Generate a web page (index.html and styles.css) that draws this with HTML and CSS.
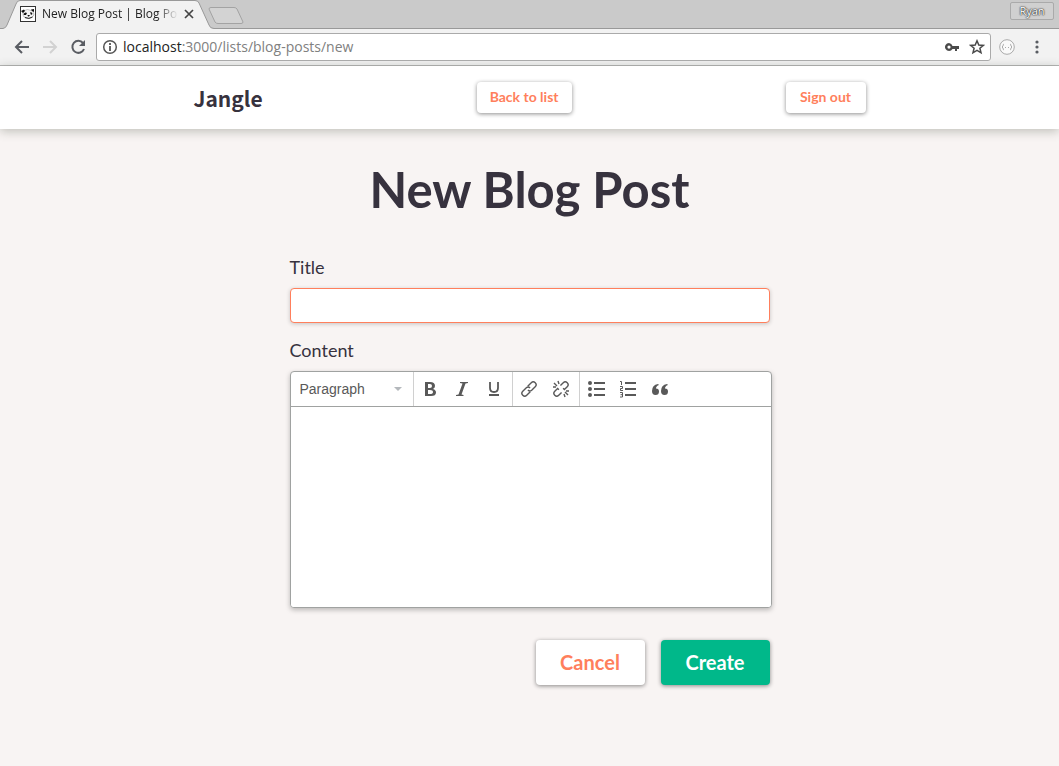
FILE: index.html
```html
<!DOCTYPE html>
<html lang="en">
<head>
<meta charset="utf-8">
<title>New Blog Post | Blog Posts</title>
<link rel="stylesheet" href="styles.css">
</head>
<body>
<div class="browser">
  <div class="tabstrip">
    <svg class="tab-shapes" width="260" height="29" viewBox="0 0 260 29" aria-hidden="true">
      <path d="M0 28.500H3Q6 28 7 25L16 4Q17 .5 20 .5H195Q198 .5 199 3L209 25Q210 28.500 214 28.500H260V29H0Z" fill="#f2f2f2"/>
      <path d="M0 28.500H3Q6 28 7 25L16 4Q17 .5 20 .5H195Q198 .5 199 3L209 25Q210 28.500 214 28.500H260" fill="none" stroke="#999"/>
      <path d="M211 7.500H234Q236 7.500 237 9L243 22Q243 23.500 241 23.500H218Q216 23.500 215 22L209 9Q209 7.500 211 7.500Z" fill="#d3d3d3" stroke="#a3a3a3"/>
    </svg>
    <div class="tab">
      <svg width="16" height="16" viewBox="0 0 16 16" aria-hidden="true">
        <rect x=".5" y=".5" width="15" height="15" fill="#fff" stroke="#333"/>
        <path d="M3 5Q7 2 13 5L14 9Q12 13 8 12.500Q3 12 3 8Z" fill="#f4f4f4" stroke="#999" stroke-width=".6"/>
        <path d="M1 5L4 3.500L5 5L3 7ZM11 3.500L14 3V6L12 5ZM3.500 8Q5 5.500 7 7L6 9H4ZM10 6.500Q12 5.500 12.500 8L11 9ZM7.500 9H10L9 10.500H8Z" fill="#111"/>
        <path d="M5 11.500Q9 13.500 12.500 11" fill="none" stroke="#222"/>
      </svg>
      <span class="tab-title">New Blog Post | Blog Posts</span>
      <button class="icon-button" aria-label="Close tab"><svg width="10" height="10" viewBox="0 0 10 10"><path d="M1 1L9 9M9 1L1 9" stroke="#444" stroke-width="1.700"/></svg></button>
    </div>
    <button class="profile">Ryan</button>
  </div>
  <div class="toolbar">
    <button class="icon-button" aria-label="Back"><svg width="16" height="16" viewBox="0 0 16 16"><path d="M15 8H2M8 2L2 8L8 14" fill="none" stroke="#5a5d63" stroke-width="2"/></svg></button>
    <button class="icon-button" aria-label="Forward"><svg width="16" height="16" viewBox="0 0 16 16"><path d="M1 8H14M8 2L14 8L8 14" fill="none" stroke="#d2d2d2" stroke-width="2"/></svg></button>
    <button class="icon-button" aria-label="Reload"><svg width="16" height="16" viewBox="0 0 16 16"><path d="M13 4A6 6 0 1 0 14 10" fill="none" stroke="#5a5d63" stroke-width="2"/><path d="M15 1V7H9Z" fill="#5a5d63"/></svg></button>
    <div class="address">
      <svg width="16" height="16" viewBox="0 0 16 16" aria-hidden="true"><circle cx="8" cy="8" r="6.300" fill="none" stroke="#555" stroke-width="1.500"/><path d="M8 4V6M8 7V12" stroke="#555" stroke-width="1.800"/></svg>
      <span class="url"><b>localhost</b>:3000/lists/blog-posts/new</span>
      <svg width="16" height="16" viewBox="0 0 16 16" aria-hidden="true"><path fill-rule="evenodd" d="M5 4A4 4 0 1 0 8.500 10H11V12H13V10H15V7H8.500A4 4 0 0 0 5 4ZM5 6.500A1.500 1.500 0 1 1 5 9.700A1.500 1.500 0 1 1 5 6.500Z" fill="#4a4a4a"/></svg>
      <svg class="star" width="16" height="16" viewBox="0 0 16 16" aria-hidden="true"><path d="M8 1.800L9.800 6L14.300 6.400L10.900 9.300L12 13.800L8 11.400L4 13.800L5.100 9.300L1.700 6.400L6.200 6Z" fill="none" stroke="#4a4a4a" stroke-width="1.500"/></svg>
    </div>
    <svg class="extension" width="16" height="16" viewBox="0 0 16 16" aria-hidden="true"><circle cx="8" cy="8" r="7.300" fill="#fafafa" stroke="#aaa"/><path d="M5 5Q4 5 4 7L3 8L4 9Q4 11 5 11M11 5Q12 5 12 7L13 8L12 9Q12 11 11 11M6 8.500H7M9 8.500H10" fill="none" stroke="#aaa"/></svg>
    <button class="icon-button" aria-label="Menu"><svg width="16" height="16" viewBox="0 0 16 16"><g fill="#5a5d63"><circle cx="8" cy="3" r="1.600"/><circle cx="8" cy="8" r="1.600"/><circle cx="8" cy="13" r="1.600"/></g></svg></button>
  </div>
</div>
<header class="site-header">
  <nav class="site-nav">
    <a class="brand" href="#">Jangle</a>
    <a class="button small" href="#">Back to list</a>
    <button class="button small">Sign out</button>
  </nav>
</header>
<main class="page">
  <h1>New Blog Post</h1>
  <form class="post-form">
    <label for="title">Title</label>
    <input class="text-field" id="title" type="text">
    <label for="content">Content</label>
    <div class="editor">
      <div class="editor-tools">
        <div class="group format">
          <select aria-label="Block format"><option>Paragraph</option></select>
          <svg width="8" height="4" viewBox="0 0 8 4" aria-hidden="true"><path d="M0 0H8L4 4Z" fill="#b4b8bc"/></svg>
        </div>
        <div class="group">
          <button type="button" aria-label="Bold"><svg width="18" height="18" viewBox="0 0 18 18"><path fill-rule="evenodd" d="M4 2H9Q14 2 14 6Q14 8 12 9Q15 10 15 12.500Q15 16 10 16H4ZM7 4V8H9Q11 8 11 6Q11 4 9 4ZM7 10V14H9Q12 14 12 12Q12 10 9 10Z"/></svg></button>
          <button type="button" aria-label="Italic"><svg width="18" height="18" viewBox="0 0 18 18"><path d="M7 2H15V3L12.500 3.500L8.500 14.500L10.500 15V16H3V15L5.500 14.500L9.500 3.500L7 3Z"/></svg></button>
          <button type="button" aria-label="Underline"><svg width="18" height="18" viewBox="0 0 18 18"><path d="M5 2V8Q5 12 9 12Q13 12 13 8V2" fill="none" stroke="#595959" stroke-width="1.800"/><path d="M4 14H14V16H4Z"/></svg></button>
        </div>
        <div class="group">
          <button type="button" aria-label="Insert link"><svg width="18" height="18" viewBox="0 0 18 18"><g transform="rotate(-45 9 9)" fill="none" stroke="#595959" stroke-width="1.400"><path d="M8 11.800H3A2.800 2.800 0 0 1 3 6.200H8A2.800 2.800 0 0 1 10.500 9"/><path d="M10 6.200H15A2.800 2.800 0 0 1 15 11.800H10A2.800 2.800 0 0 1 7.500 9"/></g></svg></button>
          <button type="button" aria-label="Remove link"><svg width="18" height="18" viewBox="0 0 18 18"><g fill="none" stroke="#595959" stroke-width="1.400"><g transform="rotate(-45 9 9)"><path d="M7 11.800H3A2.800 2.800 0 0 1 3 6.200H7V8M11 6.200H15A2.800 2.800 0 0 1 15 11.800H11V10"/></g><path d="M6 1L7 4M2 3L5 6M1 7H4M12 14L13 17M13 12L16 15M14 11H17"/></g></svg></button>
        </div>
        <div class="group last">
          <button type="button" aria-label="Bulleted list"><svg width="18" height="18" viewBox="0 0 18 18"><circle cx="3" cy="3" r="2"/><circle cx="3" cy="9" r="2"/><circle cx="3" cy="15" r="2"/><path d="M7 2H18V4H7ZM7 8H18V10H7ZM7 14H18V16H7Z"/></svg></button>
          <button type="button" aria-label="Numbered list"><svg width="18" height="18" viewBox="0 0 18 18"><path d="M6 2H17V4H6ZM6 8H17V10H6ZM6 14H17V16H6Z"/><path d="M1 1.500H2.500V5M1 6.500H3.500V8.500H1.500V10.500H4M1 12.500H3.500V17H1M1.500 14.700H3.500" fill="none" stroke="#595959"/></svg></button>
          <button type="button" aria-label="Quote"><svg width="18" height="18" viewBox="0 0 18 18"><path d="M7 4Q1 5 1 11Q1 15 4.500 15Q8 15 8 11.500Q8 8.500 5 8.500Q5 6 8 5ZM16 4Q10 5 10 11Q10 15 13.500 15Q17 15 17 11.500Q17 8.500 14 8.500Q14 6 17 5Z"/></svg></button>
        </div>
      </div>
      <textarea id="content"></textarea>
    </div>
    <div class="actions">
      <button class="button large" type="button">Cancel</button>
      <button class="button large primary" type="button">Create</button>
    </div>
  </form>
</main>
</body>
</html>
```

FILE: styles.css
```css
* {
  box-sizing: border-box;
}

body {
  margin: 0;
  min-height: 100vh;
  background: #f8f4f3;
  color: #37323e;
  font-family: Lato, "Open Sans", sans-serif;
}

button,
input,
select,
textarea {
  font: inherit;
}

svg {
  display: block;
  flex: none;
}

.browser {
  font-family: "Open Sans", "Noto Sans", sans-serif;
}

.tabstrip {
  position: relative;
  display: flex;
  justify-content: space-between;
  align-items: center;
  height: 29px;
  padding: 0 5px 0 20px;
  background: #cacaca;
  border-bottom: 1px solid #999;
}

.tab-shapes {
  position: absolute;
  left: 0;
  top: 0;
}

.tab {
  position: relative;
  display: flex;
  align-items: center;
  gap: 6px;
  width: 174px;
}

.tab-title {
  flex: 1;
  overflow: hidden;
  white-space: nowrap;
  color: #222;
  font-size: 12px;
  line-height: 18px;
  -webkit-mask-image: linear-gradient(to right, #000 115px, transparent 136px);
  mask-image: linear-gradient(to right, #000 115px, transparent 136px);
}

.icon-button {
  flex: none;
  padding: 0;
  border: 0;
  background: none;
}

.profile {
  width: 44px;
  height: 18px;
  margin-bottom: 6px;
  padding: 0;
  border: 1px solid #aaa;
  border-radius: 2px;
  background: #d0d0d0;
  color: #fff;
  font-size: 11px;
  line-height: 16px;
  text-shadow: 0 0 1px #333, 0 0 1px #333, 0 0 2px #333;
}

.toolbar {
  display: flex;
  align-items: center;
  gap: 12px;
  height: 37px;
  padding: 0 14px;
  background: #f2f2f2;
  border-bottom: 1px solid #b6b6b6;
}

.address {
  flex: 1;
  display: flex;
  align-items: center;
  gap: 5px;
  height: 28px;
  margin-left: -2px;
  padding: 0 5px;
  border: 1px solid #aaa;
  border-radius: 3px;
  background: #fff;
}

.url {
  flex: 1;
  color: #808080;
  font-size: 14px;
  line-height: 20px;
}

.url b {
  color: #222;
  font-weight: 400;
}

.star {
  margin-left: 4px;
}

.extension {
  margin: 0 2px 0 -4px;
}

.site-header {
  background: #fff;
  box-shadow: 0 2px 10px rgba(50, 60, 40, .3);
}

.site-nav {
  display: flex;
  justify-content: space-between;
  align-items: center;
  max-width: 672px;
  height: 63px;
  margin: 0 auto;
}

.brand {
  color: #37323e;
  font-family: "Noto Sans CJK JP", "Noto Sans", sans-serif;
  font-size: 21px;
  font-weight: 700;
  line-height: 32px;
  text-decoration: none;
}

.button {
  display: flex;
  justify-content: center;
  align-items: center;
  padding: 0;
  border: 0;
  border-radius: 4px;
  background: #fff;
  box-shadow: 0 1px 4px rgba(0, 0, 0, .45);
  color: #ff7f5c;
  font-weight: 700;
  text-decoration: none;
}

.small {
  min-width: 80px;
  height: 31px;
  padding: 0 13px 2px;
  font-size: 14px;
}

.page {
  max-width: 480px;
  margin: 0 auto;
  padding: 30px 0;
}

h1 {
  margin: 0 0 36px;
  font-size: 49px;
  font-weight: 700;
  line-height: 60px;
  text-align: center;
  white-space: nowrap;
}

.post-form label {
  display: block;
  margin-bottom: 9px;
  font-size: 18px;
  line-height: 24px;
}

.text-field {
  display: block;
  width: 100%;
  height: 35px;
  margin-bottom: 15px;
  padding: 0 8px;
  border: 1px solid #ff7f5c;
  border-radius: 4px;
  outline: 0;
  background: #fff;
  box-shadow: 0 1px 4px rgba(0, 0, 0, .2);
}

.editor {
  margin-right: -2px;
  border: 1px solid #a0a2a1;
  border-radius: 4px;
  background: #fff;
  box-shadow: 0 2px 5px rgba(0, 0, 0, .25);
  overflow: hidden;
}

.editor-tools {
  display: flex;
  height: 35px;
  border-bottom: 1px solid #a0a2a1;
}

.group {
  display: flex;
  align-items: center;
  padding-right: 2px;
  border-right: 1px solid #d0d0d0;
}

.last {
  border: 0;
}

.group button {
  display: flex;
  justify-content: center;
  width: 32px;
  padding: 0;
  border: 0;
  background: none;
  fill: #595959;
}

.format {
  width: 123px;
  padding: 0 11px 0 9px;
}

.format select {
  flex: 1;
  min-width: 0;
  padding: 0;
  border: 0;
  appearance: none;
  background: none;
  color: #595959;
  font-family: "Liberation Sans", Arial, sans-serif;
  font-size: 14px;
}

.editor textarea {
  display: block;
  width: 100%;
  height: 200px;
  padding: 8px;
  border: 0;
  outline: 0;
  resize: none;
}

.actions {
  display: flex;
  justify-content: flex-end;
  gap: 16px;
  margin-top: 32px;
}

.large {
  min-width: 109px;
  height: 45px;
  padding: 0 24px 2px;
  font-size: 20px;
}

.primary {
  background: #00b88a;
  color: #fff;
}
```
